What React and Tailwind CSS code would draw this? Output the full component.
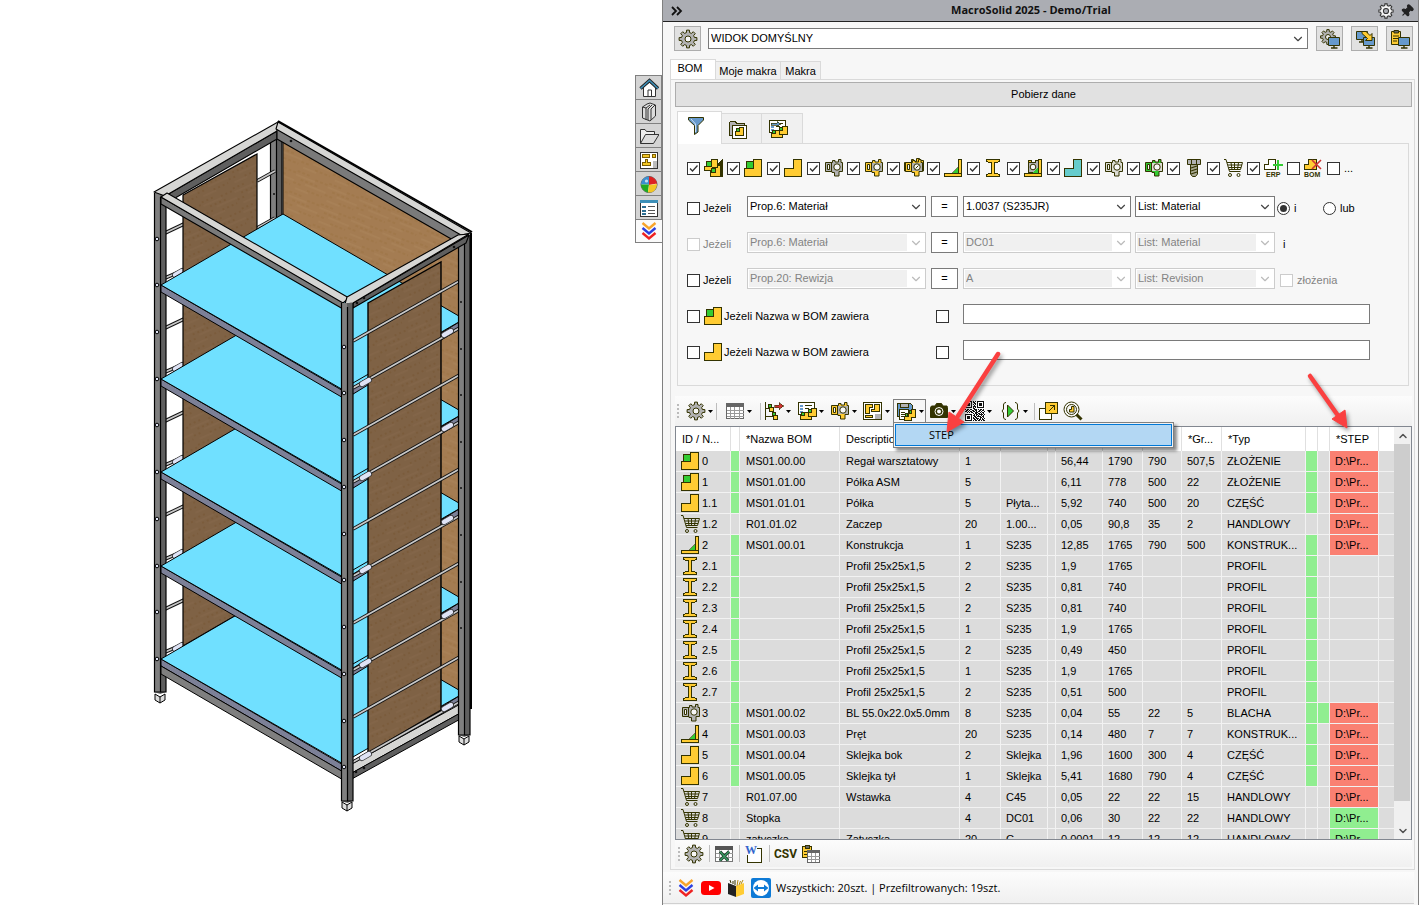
import React from 'react'
import clsx from 'clsx'
import { ChevronDown, ChevronUp, Pin } from 'lucide-react'

const INK = '#333300'
const YEL = '#ffcc33'
const GRN = '#33cc33'
const GRY = '#b2b2b2'
const BLU = '#6699cc'

const gearPath = (cx, cy, outer, inner, teeth) => {
  const points = []
  for (let i = 0; i < teeth; i++) {
    const step = (Math.PI * 2) / teeth
    const mid = i * step - Math.PI / 2
    const corners = [[-0.3, inner], [-0.2, outer], [0.2, outer], [0.3, inner]]
    corners.forEach(([k, r]) => {
      points.push(`${(cx + Math.cos(mid + k * step) * r).toFixed(2)} ${(cy + Math.sin(mid + k * step) * r).toFixed(2)}`)
    })
  }
  return `M${points.join('L')}Z`
}

const Icon = ({ children, crisp, className = 'w-5 h-5' }) => (
  <svg
    viewBox="0 0 20 20"
    className={clsx('shrink-0', className)}
    fill="none"
    stroke={INK}
    shapeRendering={crisp ? 'crispEdges' : 'auto'}
    aria-hidden="true"
  >
    {children}
  </svg>
)

const GearIcon = () => (
  <Icon>
    <path d={gearPath(10, 10, 9, 6.6, 8)} fill={GRY} />
    <circle cx="10" cy="10" r="3" fill="#f7f7f7" />
  </Icon>
)

const PartIcon = ({ fill = YEL }) => (
  <Icon crisp>
    <path d="M9.5 1.5H17.5V18.5H.5V10.5H9.5Z" fill={fill} />
  </Icon>
)

const AssemblyIcon = () => (
  <Icon crisp>
    <path d="M9.5 1.5H17.5V18.5H.5V10.5H9.5Z" fill={YEL} />
    <path d="M2.5 3.5H9.5V10.5H2.5Z" fill={GRN} />
  </Icon>
)

const MultiAssemblyIcon = () => (
  <Icon crisp>
    <path d="M7.5 1.5H13.5V6.5H17.5V18.5H6.5V12.5H.5V8.5H7.5Z" fill={YEL} />
    <path d="M8 9.5H13.5V7" />
    <path d="M2.5 3.5H7.5V8.5H2.5Z M7.5 10.5H11.5V14.5H7.5Z" fill={GRN} />
    <path d="M13.5 6.5L18.5 1.5V18.5H16.5V7.5H13.5Z" fill={INK} />
  </Icon>
)

const SheetIcon = ({ fill = GRY, body = fill, multi = false }) => (
  <Icon>
    {multi && <path d="M.5 4.5H7.5V1.5H9.5V3.5H12.5V.5H15.5V2.5H19.5V13H.5Z" fill={YEL} />}
    <path d="M1.5 4.5H8.5V2.5H11V4H14.5V1.5H17V4.5H18.5V13.5H15V18H10.5V14.5H8V13.5H1.5Z" fill={fill} />
    <path d="M8 5H18V13H8Z" fill={body} stroke="none" />
    <path d="M7.5 4.5V13.5" />
    <path d="M3.5 6.5H5.5V11.5H3.5Z" fill="#f7f7f7" />
    <circle cx="13" cy="9" r="3.2" fill="#f7f7f7" />
    {multi && <path d="M11.5 10.5L14.5 7.5" />}
  </Icon>
)

const FrameIcon = () => (
  <Icon crisp>
    <path d="M14.5 1.5H17.5V15.5H14.5Z M.5 15.5H17.5V18.5H.5Z" fill={YEL} />
    <path d="M8 15L14 9V15Z" fill={GRN} stroke={INK} strokeWidth="0.6" />
  </Icon>
)

const ProfileIcon = () => (
  <Icon crisp>
    <path d="M2.5 1.5H15.5V3.5L10.5 5V15L15.5 16.5V18.5H2.5V16.5L7.5 15V5L2.5 3.5Z" fill={YEL} />
  </Icon>
)

const WeldmentIcon = () => (
  <Icon crisp>
    <path d="M4.5 2.5H7.5V4.5H11.5V2.5H14.5V14.5H4.5Z" fill={GRY} />
    <path d="M14.5 1.5H17.5V15.5H14.5Z M.5 15.5H17.5V18.5H.5Z M4.5 2.5H7.5V4.5H4.5Z" fill={YEL} />
    <circle cx="9" cy="9" r="2.8" fill="#f7f7f7" shapeRendering="auto" />
    <path d="M8 15L14 9V15Z" fill={GRN} stroke="none" />
  </Icon>
)

const BoltIcon = () => (
  <Icon>
    <path d="M3.5 1.5H16.5V6.5H3.5Z" fill={GRY} />
    <path d="M7.5 1.5V6.5M12.5 1.5V6.5" />
    <path d="M6.5 6.5H13.5V16L11.5 18.5H8.5L6.5 16Z" fill="#a8a890" />
    <path d="M7 10L13 8M7 13L13 11M7 16L13 14" strokeWidth="1.2" />
  </Icon>
)

const CartIcon = () => (
  <Icon>
    <path d="M0 1.5H2L5.5 13.5H16.5M3 4.5H18.5L16.5 11.5H5M4 7H18M4.5 9.5H17M7 4.5L8 11.5M10.5 4.5V11.5M14.5 4.5L13.5 11.5" />
    <circle cx="6" cy="17" r="1.5" />
    <circle cx="14.5" cy="17" r="1.5" />
  </Icon>
)

const IconCaption = ({ x, children }) => (
  <text x={x} y="19" fontSize="7" fontWeight="700" fontFamily="Liberation Sans, sans-serif" fill={INK} stroke="none">
    {children}
  </text>
)

const ErpIcon = () => (
  <Icon className="w-5 h-5 overflow-visible">
    <path d="M4.5 1.5H11.5V11.5H.5V6.5H4.5Z" fill="#fff" shapeRendering="crispEdges" />
    <path d="M9 7H19M14 2V12" stroke={GRN} strokeWidth="2" />
    <IconCaption x="2">ERP</IconCaption>
  </Icon>
)

const BomIcon = () => (
  <Icon className="w-5 h-5 overflow-visible">
    <path d="M4.5 1.5H12.5V11.5H.5V6.5H4.5Z" fill={YEL} shapeRendering="crispEdges" />
    <path d="M8 2L17 11M17 2L8 11" stroke="#cc3333" strokeWidth="1.6" />
    <IconCaption x="0">BOM</IconCaption>
  </Icon>
)

const Monitor = ({ x, y }) => (
  <g transform={`translate(${x} ${y})`}>
    <path d="M.5 .5H11.5V8.5H.5Z" fill={BLU} />
    <path d="M6 8.5V11M3 11H9.5" strokeWidth="1.4" />
  </g>
)

const GearMonitorIcon = () => (
  <Icon>
    <path d={gearPath(8, 8, 7.5, 5.5, 8)} fill={GRY} />
    <circle cx="8" cy="8" r="2.5" fill="#eee" />
    <Monitor x="8" y="8" />
  </Icon>
)

const SwapMonitorIcon = () => (
  <Icon>
    <Monitor x="1" y="2" />
    <Monitor x="8" y="8" />
    <path d="M7 2.5H11L15 6.5L17 4.5V11.5H10.5L12.5 9.5L7 4.5Z" fill={YEL} />
  </Icon>
)

const ClipboardMonitorIcon = () => (
  <Icon>
    <path d="M1.5 2.5H10.5V15.5H1.5Z" fill={YEL} />
    <path d="M4 1.5H8.5V4H4Z" fill="#666" />
    <path d="M3 7H9M3 9.5H9M3 12H7" />
    <Monitor x="8" y="8" />
  </Icon>
)

const FunnelIcon = () => (
  <Icon>
    <path d="M2.5 1.5H17.5V4L12 9.5V16L8.5 18.5V9.5L2.5 4Z" fill={BLU} />
    <path d="M5 3L9.5 8V16" stroke="#cfe0f2" />
  </Icon>
)

const FolderPartIcon = () => (
  <Icon crisp>
    <path d="M1.5 16.5V3.5L2.5 2.5H7.5L8.5 4.5H16.5V16.5Z" fill={GRY} />
    <path d="M4.5 6.5H18.5V19H4.5Z" fill="#fff" />
    <path d="M11.5 8.5H15.5V16.5H7.5V12.5H11.5Z" fill={YEL} />
    <path d="M8.5 9.5H11.5V12.5H8.5Z" fill={GRN} />
  </Icon>
)

const ListPartIcon = ({ arrow }) => (
  <Icon crisp>
    <path d="M1.5 1.5H17.5V13.5H1.5Z" fill="#fff" />
    <path d="M3 4.5H6M3 7.5H6M3 10.5H6" stroke={BLU} strokeWidth="2" />
    <path d="M8 4.5H15M8 7.5H12" />
    {arrow && <path d="M3 4H9V2.5L13 5L9 7.5V6H3Z" fill={BLU} strokeWidth="0.7" />}
    <path d="M14.5 7.5H19V15.5H14.5V18.5H3.5V14.5H7.5V11.5H14.5Z" fill={YEL} />
    <path d="M11.5 11.5V15.5H14.5" />
    <path d="M11.5 8.5H14.5V11.5H11.5Z M4.5 11.5H7.5V14.5H4.5Z" fill={GRN} />
  </Icon>
)

const GridIcon = () => (
  <Icon crisp>
    <path d="M1.5 2.5H18.5V17.5H1.5Z" fill="#fff" stroke="#666" />
    <path d="M1 2H19V6H1Z" fill="#666" stroke="none" />
    <path d="M1.5 9.5H18.5M1.5 12.5H18.5M1.5 15.5H18.5M5.5 6V17.5M9.5 6V17.5M14.5 6V17.5" stroke="#999" />
  </Icon>
)

const TreeIcon = () => (
  <Icon crisp>
    <path d="M1.5 1V19" />
    <path d="M2 7.5H5M2 15.5H9" />
    <path d="M5.5 6.5H9.5V10.5H5.5Z M9.5 14.5H13.5V18.5H9.5Z" fill={YEL} />
    <path d="M4.5 3.5H7.5V6.5H4.5Z M8.5 11.5H11.5V14.5H8.5Z" fill={GRN} />
    <path d="M10.5 4H15V1.5L19.5 5L15 8.5V6.5H10.5Z" fill="#cc3333" strokeWidth="0.6" />
  </Icon>
)

const DrawingIcon = () => (
  <Icon crisp>
    <path d="M.5 1.5H18.5V18.5H.5Z" fill="#fff" />
    <path d="M2.5 3.5H9.5V6.5H6.5V12.5H2.5Z M11.5 3.5H16.5V10.5H8.5V8.5H11.5Z M2.5 14.5H9.5V16.5H2.5Z" fill={YEL} />
    <path d="M12 13H18V18H12Z" fill={GRY} stroke="none" />
  </Icon>
)

const SaveStepIcon = () => (
  <Icon crisp>
    <path d="M.5 1.5H13.5L15.5 3.5V14.5H.5Z" fill={BLU} />
    <path d="M3.5 1.5H11.5V5.5H3.5Z" fill={GRY} />
    <path d="M2.5 7.5H11.5V17.5H2.5Z" fill="#fff" />
    <path d="M4 10.5H8M4 12.5H8M4 14.5H7" />
    <path d="M14.5 7.5H18.5V15.5H14.5V18.5H7.5V14.5H11.5V11.5H14.5Z" fill={YEL} />
    <path d="M12.5 8.5H14.5V11.5H12.5Z M8.5 11.5H10.5V14.5H8.5Z" fill={GRN} />
  </Icon>
)

const CameraIcon = () => (
  <Icon>
    <path d="M1.5 6.5L2.5 5H6L7.5 2.5H12.5L14 5H18L18.5 6.5V16.5H1.5Z" fill={INK} />
    <circle cx="10" cy="10.5" r="4" stroke="#fff" />
    <circle cx="10" cy="10.5" r="2" fill="#fff" stroke="none" />
  </Icon>
)

const QR_ROWS = [
  '11111110101011111110', '10000010110010000010', '10111010011010111010', '10111010101010111010',
  '10111010010010111010', '10000010111010000010', '11111110101011111110', '00000000110000000000',
  '10110110011101011010', '01101001101100110110', '11010110110101101001', '00101011001110010110',
  '00000000101101101010', '11111110010110111101', '10000010110101001010', '10111010011011110110',
  '10111010101100011010', '10111010110111010101', '10000010011010110110', '11111110101101101011'
]

const QrIcon = () => (
  <svg viewBox="0 0 20 20" className="w-5 h-5 shrink-0" shapeRendering="crispEdges" aria-hidden="true">
    <path d="M0 0H20V20H0Z" fill="#fff" />
    {QR_ROWS.map((row, y) =>
      row.split('').map((bit, x) => bit === '1' && <rect key={`${x}-${y}`} x={x} y={y} width="1" height="1" fill="#111" />)
    )}
  </svg>
)

const RunIcon = () => (
  <Icon>
    <path d="M5 1.5C3.5 1.5 2.5 2.5 2.5 4V8L1 10L2.5 12V16C2.5 17.5 3.5 18.5 5 18.5M14 1.5C15.5 1.5 16.5 2.5 16.5 4V8L18 10L16.5 12V16C16.5 17.5 15.5 18.5 14 18.5" />
    <path d="M6.5 4L12.5 10L6.5 16Z" fill={GRN} />
  </Icon>
)

const ExportIcon = () => (
  <Icon crisp>
    <path d="M.5 7.5H12.5V18.5H.5Z" fill="#fff" />
    <path d="M6.5 1.5H18.5V12.5H6.5Z" fill={YEL} />
    <path d="M10 10L15 5M11 4.5H15.5V9" strokeWidth="1.4" />
  </Icon>
)

const SearchPartIcon = () => (
  <Icon>
    <circle cx="8.5" cy="8.5" r="7.5" />
    <circle cx="8.5" cy="8.5" r="5" />
    <path d="M8.5 5.5H11V11H6.5V8.5H8.5Z" fill={YEL} />
    <path d="M13.5 13.5L18.5 18.5" strokeWidth="3" />
  </Icon>
)

const ExcelIcon = () => (
  <Icon crisp>
    <path d="M1.5 2.5H18.5V17.5H1.5Z" fill="#fff" stroke="#777" />
    <path d="M1 2H19V6H1Z" fill="#555" stroke="none" />
    <path d="M1.5 9.5H18.5M1.5 13.5H18.5M5.5 6V17M14.5 6V17" stroke="#999" />
    <path d="M6 7.5L14 16.5M15 7.5L6 16.5" stroke="#1d3c2a" strokeWidth="3" shapeRendering="auto" />
    <path d="M6 7.5L14 16.5M15 7.5L6 16.5" stroke="#3a9a62" strokeWidth="1.4" shapeRendering="auto" />
  </Icon>
)

const WordIcon = () => (
  <Icon>
    <path d="M13 4.5H17.5V18.5H3.5V11" fill="#fff" shapeRendering="crispEdges" />
    <text x="1" y="10" fontSize="12" fontWeight="700" fontFamily="Liberation Serif, serif" fill="#3366cc" stroke="none">W</text>
  </Icon>
)

const PasteGridIcon = () => (
  <Icon crisp>
    <path d="M1.5 2.5H10.5V13.5H1.5Z" fill={YEL} />
    <path d="M4 1.5H8.5V4H4Z" fill="#666" />
    <path d="M3 7.5H6M3 10.5H6" />
    <path d="M6.5 6.5H18.5V18.5H6.5Z" fill="#fff" stroke="#666" />
    <path d="M6 6H19V9H6Z" fill="#666" stroke="none" />
    <path d="M6.5 12.5H18.5M6.5 15.5H18.5M10.5 9V18M14.5 9V18" stroke="#999" />
  </Icon>
)

const ChevronsIcon = ({ colors = ['#f7a42b', '#2b3fe0', '#ee2222'] }) => (
  <Icon>
    {colors.map((color, i) => (
      <path key={color} d={`M3.5 ${2 + i * 5}L10 ${7.5 + i * 5}L16.5 ${2 + i * 5}`} stroke={color} strokeWidth="2.4" />
    ))}
  </Icon>
)

const HomeIcon = () => (
  <Icon>
    <path d="M4.5 9V18.5H16.5V9L10.5 4Z" fill="#fff" stroke="#333" />
    <path d="M9 18V12H12.5V18" stroke="#333" />
    <path d="M1.5 10.5L10.5 2.5L19 10.5" stroke="#222" strokeWidth="3.4" />
    <path d="M1.5 10.5L10.5 2.5L19 10.5" stroke="#3c8fb8" strokeWidth="1.6" />
  </Icon>
)

const BooksIcon = () => (
  <Icon>
    <path d="M3.5 5L8 2L11 1L16.5 3V14L11 19L3.5 16Z" fill="#ddd" stroke="#333" />
    <path d="M3.5 5L7 6V18M7 6L11 3M9 7V18M9 7L13 3M12 7V18M12 7L16 3" stroke="#333" />
  </Icon>
)

const OpenFolderIcon = () => (
  <Icon>
    <path d="M1.5 17.5V3.5H6L7.5 5.5H15.5V8" fill="#eee" stroke="#333" />
    <path d="M1.5 17.5L6.5 8.5H20L14.5 17.5Z" fill="#ddd" stroke="#333" />
  </Icon>
)

const PaletteIcon = () => (
  <Icon crisp>
    <path d="M1.5 2.5H18.5V18.5H1.5Z" fill="#fff" stroke="#333" />
    <path d="M3.5 4.5H10.5V7.5H3.5Z M13.5 4.5H16.5V7.5H13.5Z M6.5 9.5H8.5V12.5H11.5V15.5H3.5V12.5H6.5Z" fill="#f3c623" stroke="#7a5c00" />
    <path d="M14 11H18V18H14Z" fill="#bbb" stroke="none" />
  </Icon>
)

const AppearanceIcon = () => (
  <Icon>
    <circle cx="10" cy="10.5" r="8" fill="#fff" stroke="#555" />
    <path d="M10 2.5A8 8 0 0 0 2 10.5L10 10.5Z" fill="#3c8fd0" stroke="none" />
    <path d="M10 2.5A8 8 0 0 1 18 9.5L10 11Z" fill="#dd2222" stroke="none" />
    <path d="M2 10.5A8 8 0 0 0 9 18.5L10 10.5Z" fill="#22aa22" stroke="none" />
    <path d="M18 10A8 8 0 0 1 9 18.5L10 11Z" fill="#f3c623" stroke="none" />
    <circle cx="7.5" cy="7" r="1.6" fill="#fff" opacity="0.7" stroke="none" />
  </Icon>
)

const PropertiesIcon = () => (
  <Icon crisp>
    <path d="M1.5 2.5H18.5V18.5H1.5Z" fill="#fff" stroke="#333" />
    <path d="M1 2H19V5H1Z" fill="#3c8fb8" stroke="none" />
    <path d="M3 8.5H7M3 12.5H7M3 16H7" stroke="#2d6f94" strokeWidth="2" />
    <path d="M9 8.5H16M9 12.5H16M9 15.5H16" stroke="#555" />
  </Icon>
)

const YoutubeIcon = () => (
  <Icon>
    <rect x="0" y="3" width="20" height="14" rx="3.5" fill="#ff0000" stroke="none" />
    <path d="M8 7L13.5 10L8 13Z" fill="#fff" stroke="none" />
  </Icon>
)

const BookIcon = () => (
  <Icon>
    <path d="M2 5L10 8V19L2 16Z" fill="#222" stroke="none" />
    <path d="M18 5L10 8V19L18 16Z" fill={YEL} stroke="none" />
    <path d="M11 8L12 2M13 7L14.5 3M15 6L17 2" stroke="#b28a10" />
    <path d="M5 5L4 2M7 6V3M9 7V2" />
  </Icon>
)

const RemoteIcon = () => (
  <Icon>
    <rect x="0" y="0" width="20" height="20" rx="2" fill="#0d7ad6" stroke="none" />
    <circle cx="10" cy="10" r="8" fill="#fff" stroke="none" />
    <path d="M2.5 10L7 6.5V9H13V6.5L17.5 10L13 13.5V11H7V13.5Z" fill="#0d7ad6" stroke="none" />
  </Icon>
)

const ROW_ICONS = {
  asm: <AssemblyIcon />,
  part: <PartIcon />,
  cart: <CartIcon />,
  frame: <FrameIcon />,
  profile: <ProfileIcon />,
  sheet: <SheetIcon />
}

const typeFilters = [
  { name: 'Wszystkie', icon: <MultiAssemblyIcon />, checked: true },
  { name: 'Złożenie', icon: <AssemblyIcon />, checked: true },
  { name: 'Część', icon: <PartIcon />, checked: true },
  { name: 'Blacha', icon: <SheetIcon />, checked: true },
  { name: 'Blacha złożenie', icon: <SheetIcon fill={YEL} body={GRY} />, checked: true },
  { name: 'Blachy', icon: <SheetIcon fill={YEL} body={GRY} multi />, checked: true },
  { name: 'Konstrukcja', icon: <FrameIcon />, checked: true },
  { name: 'Profil', icon: <ProfileIcon />, checked: true },
  { name: 'Konstrukcja blacha', icon: <WeldmentIcon />, checked: true },
  { name: 'Część inna', icon: <PartIcon fill="#66cccc" />, checked: true },
  { name: 'Blacha inna', icon: <SheetIcon fill="#dcdcd4" />, checked: true },
  { name: 'Blacha zielona', icon: <SheetIcon fill={GRN} body="#dcdcd4" />, checked: true },
  { name: 'Normalia', icon: <BoltIcon />, checked: true },
  { name: 'Handlowy', icon: <CartIcon />, checked: true },
  { name: 'ERP', icon: <ErpIcon />, checked: true },
  { name: 'BOM', icon: <BomIcon />, checked: false }
]

const conditions = [
  { prop: 'Prop.6: Materiał', value: '1.0037 (S235JR)', list: 'List: Material', disabled: false, off: false },
  { prop: 'Prop.6: Materiał', value: 'DC01', list: 'List: Material', disabled: true, off: true },
  { prop: 'Prop.20: Rewizja', value: 'A', list: 'List: Revision', disabled: true, off: false }
]

const columns = [
  { label: 'ID / N...', width: 55 },
  { label: '', width: 9 },
  { label: '*Nazwa BOM', width: 100 },
  { label: 'Description', width: 120 },
  { label: '', width: 41 },
  { label: '', width: 47 },
  { label: '', width: 8 },
  { label: '', width: 47 },
  { label: '', width: 40 },
  { label: '', width: 39 },
  { label: '*Gr...', width: 40 },
  { label: '*Typ', width: 84 },
  { label: '', width: 12 },
  { label: '', width: 12 },
  { label: '*STEP', width: 49 },
  { label: '', width: 16 }
]

// icon, id, name, description, qty, material, mass, length, width, thickness, type, flags, step
const rows = [
  ['asm', '0', 'MS01.00.00', 'Regał warsztatowy', '1', '', '56,44', '1790', '790', '507,5', 'ZŁOŻENIE', 'g', 'red'],
  ['asm', '1', 'MS01.01.00', 'Półka ASM', '5', '', '6,11', '778', '500', '22', 'ZŁOŻENIE', 'g', 'red'],
  ['part', '1.1', 'MS01.01.01', 'Półka', '5', 'Płyta...', '5,92', '740', '500', '20', 'CZĘŚĆ', 'g', 'red'],
  ['cart', '1.2', 'R01.01.02', 'Zaczep', '20', '1.00...', '0,05', '90,8', '35', '2', 'HANDLOWY', '', 'red'],
  ['frame', '2', 'MS01.00.01', 'Konstrukcja', '1', 'S235', '12,85', '1765', '790', '500', 'KONSTRUK...', 'g', 'red'],
  ['profile', '2.1', '', 'Profil 25x25x1,5', '2', 'S235', '1,9', '1765', '', '', 'PROFIL', 'g', ''],
  ['profile', '2.2', '', 'Profil 25x25x1,5', '2', 'S235', '0,81', '740', '', '', 'PROFIL', 'g', ''],
  ['profile', '2.3', '', 'Profil 25x25x1,5', '2', 'S235', '0,81', '740', '', '', 'PROFIL', 'g', ''],
  ['profile', '2.4', '', 'Profil 25x25x1,5', '1', 'S235', '1,9', '1765', '', '', 'PROFIL', 'g', ''],
  ['profile', '2.5', '', 'Profil 25x25x1,5', '2', 'S235', '0,49', '450', '', '', 'PROFIL', 'g', ''],
  ['profile', '2.6', '', 'Profil 25x25x1,5', '1', 'S235', '1,9', '1765', '', '', 'PROFIL', 'g', ''],
  ['profile', '2.7', '', 'Profil 25x25x1,5', '2', 'S235', '0,51', '500', '', '', 'PROFIL', 'g', ''],
  ['sheet', '3', 'MS01.00.02', 'BL 55.0x22.0x5.0mm', '8', 'S235', '0,04', '55', '22', '5', 'BLACHA', 'gg', 'red'],
  ['frame', '4', 'MS01.00.03', 'Pręt', '20', 'S235', '0,14', '480', '7', '7', 'KONSTRUK...', 'g', 'red'],
  ['part', '5', 'MS01.00.04', 'Sklejka bok', '2', 'Sklejka', '1,96', '1600', '300', '4', 'CZĘŚĆ', 'g', 'red'],
  ['part', '6', 'MS01.00.05', 'Sklejka tył', '1', 'Sklejka', '5,41', '1680', '790', '4', 'CZĘŚĆ', 'g', 'red'],
  ['cart', '7', 'R01.07.00', 'Wstawka', '4', 'C45', '0,05', '22', '22', '15', 'HANDLOWY', '', 'red'],
  ['cart', '8', 'Stopka', '', '4', 'DC01', '0,06', '30', '22', '22', 'HANDLOWY', '', 'green'],
  ['cart', '9', 'zatyczka', 'Zatyczka', '20', 'G...', '0,0001', '12', '12', '12', 'HANDLOWY', '', 'green']
]

const sideTabs = [
  { name: 'Zasoby', icon: <HomeIcon /> },
  { name: 'Biblioteka projektu', icon: <BooksIcon /> },
  { name: 'Eksplorator plików', icon: <OpenFolderIcon /> },
  { name: 'Paleta widoków', icon: <PaletteIcon /> },
  { name: 'Wygląd', icon: <AppearanceIcon /> },
  { name: 'Właściwości', icon: <PropertiesIcon /> }
]

const SHELVES = [659, 566, 472, 379, 285]
const RODS = [0, 1, 2, 3, 4, 5, 6, 7, 8]

const Foot = ({ x, y }) => (
  <g>
    <path d={`M${x - 5} ${y}L${x} ${y + 3}L${x + 5} ${y}V${y + 6}L${x} ${y + 9}L${x - 5} ${y + 6}Z`} fill="#ddd" stroke="#000" />
    <path d={`M${x} ${y + 3}V${y + 9}`} stroke="#000" />
  </g>
)

const Post = ({ x, top, bottom }) => (
  <g>
    <path d={`M${x} ${top}H${x + 6}V${bottom + 2}L${x} ${bottom}Z`} fill="#7f7f7f" />
    <path d={`M${x + 6} ${top}H${x + 12}V${bottom}L${x + 6} ${bottom + 2}Z`} fill="#5f5f5f" />
    <path d={`M${x}.5 ${top}V${bottom}H${x + 12}V${top}M${x + 6}.5 ${top + 4}V${bottom}`} stroke="#000" fill="none" strokeWidth="1.2" />
  </g>
)

const Rod = ({ x1, y1, x2, y2 }) => (
  <g>
    <path d={`M${x1} ${y1}L${x2} ${y2}`} stroke="#111" strokeWidth="3.6" />
    <path d={`M${x1} ${y1}L${x2} ${y2}`} stroke="#c9c9c9" strokeWidth="1.8" />
  </g>
)

const Clip = ({ x, y }) => (
  <g strokeLinecap="round">
    <path d={`M${x - 3} ${y + 2}L${x + 4} ${y - 2}`} stroke="#333" strokeWidth="6" />
    <path d={`M${x - 3} ${y + 2}L${x + 4} ${y - 2}`} stroke="#dfe3f5" strokeWidth="4.4" />
  </g>
)

const ShelfModel = () => (
  <svg viewBox="0 0 635 905" className="w-full" role="img" aria-label="Regał warsztatowy">
    <defs>
      <pattern id="grain-light" width="34" height="22" patternUnits="userSpaceOnUse" patternTransform="rotate(22)">
        <rect width="34" height="22" fill="#a47c52" />
        <path d="M0 3H14M20 5H34M6 10H26M0 15H9M16 18H32" stroke="#96703f" strokeWidth="0.7" strokeDasharray="3 2" />
        <path d="M0 7H20M12 13H34M4 20H18" stroke="#ad875d" strokeWidth="0.8" />
      </pattern>
      <pattern id="grain-dark" width="34" height="22" patternUnits="userSpaceOnUse" patternTransform="rotate(-24)">
        <rect width="34" height="22" fill="#7f6245" />
        <path d="M0 3H14M20 5H34M6 10H26M0 15H9M16 18H32" stroke="#73502a" strokeWidth="0.7" strokeDasharray="2 3" />
        <path d="M0 7H20M12 13H34M4 20H18" stroke="#866a4d" strokeWidth="0.8" />
      </pattern>
    </defs>

    {/* back posts and panels */}
    <Post x={270} top={132} bottom={230} />
    <path d="M283 138L459 240V700L283 600Z" fill="url(#grain-light)" stroke="#000" />
    {[233, 328, 421, 515, 609].map((y) => (
      <Rod key={y} x1={165} y1={y} x2={184} y2={y - 9} />
    ))}
    {SHELVES.map((y) => (
      <g key={y}>
        <Rod x1={165} y1={y - 7} x2={184} y2={y - 15} />
        <Clip x={178} y={y - 12} />
      </g>
    ))}
    <Rod x1={257} y1={181} x2={275} y2={171} />
    <Rod x1={257} y1={228} x2={275} y2={218} />
    <path d="M183 195L257 154V603L183 646Z" fill="url(#grain-dark)" stroke="#000" strokeWidth="1.2" />
    <Post x={154} top={193} bottom={692} />

    {/* shelves, bottom one first */}
    {SHELVES.map((y) => (
      <g key={y} stroke="#000" strokeWidth="1">
        <path d={`M161 ${y}L345 ${y + 107}L464 ${y + 34}V${y + 41}L345 ${y + 114}L161 ${y + 7}Z`} fill="#7c8097" />
        <path d={`M161 ${y}L283 ${y - 71}L464 ${y + 34}L346 ${y + 102}L345 ${y + 106}Z`} fill="#70e0ff" />
      </g>
    ))}

    {/* lower rails */}
    <path d="M161 666L345 773V781L161 674Z" fill="#7f7f7f" stroke="#000" />
    <path d="M350 765L464 702V711L350 774Z" fill="#d6d6d4" stroke="#000" />
    <path d="M350 774L464 711V717L350 780Z" fill="#5f5f5f" stroke="#000" />

    {/* side panel */}
    <path d="M368 303L441 262V710L368 753Z" fill="url(#grain-dark)" stroke="#000" strokeWidth="1.4" />
    {RODS.map((i) => (
      <Rod key={i} x1={353} y1={341 + i * 47} x2={463} y2={279 + i * 47} />
    ))}
    <Rod x1={353} y1={762} x2={463} y2={700} />
    {SHELVES.map((y) => (
      <g key={y}>
        <Clip x={365} y={y + 97} />
        <Clip x={447} y={y + 48} />
      </g>
    ))}

    {/* posts */}
    <Post x={458} top={235} bottom={735} />
    <path d="M471 233V709" stroke="#000" strokeWidth="2" />

    {/* upper frame */}
    <g stroke="#000" strokeWidth="1.1" strokeLinejoin="round">
      <path d="M165 196L277 131V139L170 201Z" fill="#5f5f5f" />
      <path d="M154 192L278 122L283 126L277 131L165 196Z" fill="#d6d6d4" />
      <path d="M277 129L461 234L453 240L277 139Z" fill="#7a7a7a" />
      <path d="M278 122L471 233L461 235L276 129Z" fill="#d6d6d4" />
      <path d="M161 197L343 302V309L161 204Z" fill="#7a7a7a" />
      <path d="M167 193L349 298L343 303L161 197Z" fill="#d6d6d4" />
      <path d="M353 303L469 235L466 243L353 308Z" fill="#5f5f5f" />
      <path d="M347 297L458 235L469 234L353 303L345 304Z" fill="#d6d6d4" />
    </g>
    <path d="M278 121L472 232" stroke="#000" strokeWidth="2" />
    <Post x={341} top={303} bottom={801} />
    <g fill="#e0e4f5" stroke="#000">
      {[347, 393, 440, 487, 534, 580, 627, 674, 721, 767].map((y) => (
        <circle key={y} cx="344" cy={y} r="1.8" />
      ))}
      {[239, 285, 332, 379, 425, 472, 519, 566, 612, 659].map((y) => (
        <circle key={y} cx="157" cy={y} r="1.8" />
      ))}
    </g>
    <g fill="#111">
      {[302, 349, 395, 442, 488, 535, 582, 628].map((y) => (
        <circle key={y} cx="461" cy={y} r="1" />
      ))}
      <circle cx="274" cy="194" r="1" />
      <circle cx="357" cy="303" r="1.3" />
      <circle cx="364" cy="298" r="1.3" />
      <circle cx="291" cy="141" r="1.3" />
      <circle cx="356" cy="772" r="1.3" />
      <circle cx="364" cy="768" r="1.3" />
      <circle cx="454" cy="247" r="1.3" />
    </g>
    <Foot x={160} y={694} />
    <Foot x={347} y={802} />
    <Foot x={464} y={736} />
  </svg>
)

const Checkbox = ({ label, ...props }) => (
  <span className="relative inline-flex w-[13px] h-[13px] shrink-0">
    <input
      type="checkbox"
      aria-label={label}
      className="peer appearance-none w-[13px] h-[13px] bg-white border border-[#333] disabled:border-[#ccc]"
      {...props}
    />
    <svg viewBox="0 0 13 13" className="absolute inset-0 hidden peer-checked:block pointer-events-none" fill="none" stroke="#333" strokeWidth="1.3">
      <path d="M3 6.5L5.5 9L10.5 3.5" />
    </svg>
  </span>
)

const Radio = (props) => (
  <span className="relative inline-flex w-[13px] h-[13px] shrink-0">
    <input type="radio" className="peer appearance-none w-[13px] h-[13px] rounded-full bg-white border border-[#333]" {...props} />
    <span className="absolute inset-[3px] rounded-full bg-[#333] hidden peer-checked:block pointer-events-none" />
  </span>
)

const Select = ({ value, label, disabled, className }) => (
  <span className={clsx('relative block h-[21px]', className)}>
    <select
      aria-label={label}
      disabled={disabled}
      className="appearance-none block w-full h-full pl-[2px] pr-5 pb-[2px] bg-white text-black border border-[#7a7a7a] disabled:border-[#ccc] disabled:text-[#838383] disabled:opacity-100 disabled:bg-[#f0f0f0] disabled:shadow-[inset_0_0_0_1px_white]"
    >
      <option>{value}</option>
    </select>
    <span className={clsx('absolute right-px top-px bottom-px w-[18px] flex items-center justify-center bg-white pointer-events-none', disabled ? 'text-[#bbb]' : 'text-[#444]')}>
      <ChevronDown className="w-[14px] h-[14px]" strokeWidth={2} />
    </span>
  </span>
)

const SquareButton = ({ label, children, className }) => (
  <button type="button" aria-label={label} className={clsx('w-[27px] h-[25px] shrink-0 flex items-center justify-center border border-[#adadad] bg-[#e1e1e1]', className)}>
    {children}
  </button>
)

const Grip = () => (
  <span className="flex flex-col gap-[2px] w-[2px] shrink-0">
    {[0, 1, 2, 3].map((i) => (
      <span key={i} className="w-[2px] h-[2px] bg-[#bbb]" />
    ))}
  </span>
)

const Separator = ({ className }) => <span className={clsx('w-px h-[17px] bg-[#bdbdbd] shrink-0', className)} />

const Caret = () => (
  <svg viewBox="0 0 5 3" className="w-[5px] h-[3px] shrink-0" aria-hidden="true">
    <path d="M0 0H5L2.5 3Z" fill="#000" />
  </svg>
)

const ToolButton = ({ label, children, active }) => (
  <button
    type="button"
    aria-label={label}
    className={clsx('h-6 w-[33px] shrink-0 flex items-center gap-[2px] pl-[3px]', active && 'border border-b-0 border-[#808080] bg-[#f6f6f6]')}
  >
    {children}
    <Caret />
  </button>
)

const TitleBar = () => (
  <header className="h-[22px] shrink-0 flex items-center bg-[#abadb3] border-b border-[#222] text-[#111]">
    <button type="button" aria-label="Zwiń" className="w-[27px] h-full flex items-center justify-center">
      <svg viewBox="0 0 12 10" className="w-3 h-[10px]" fill="none" stroke="#111" strokeWidth="1.8">
        <path d="M1 1L5 5L1 9M6 1L10 5L6 9" />
      </svg>
    </button>
    <h1 className="flex-1 pr-1 pb-[2px] text-center text-[11px] leading-4 font-bold font-['Open_Sans',sans-serif]">MacroSolid 2025 - Demo/Trial</h1>
    <button type="button" aria-label="Ustawienia" className="w-5 h-full flex items-center justify-center">
      <svg viewBox="0 0 20 20" className="w-4 h-4" stroke="#333" strokeWidth="1.3">
        <path d={gearPath(10, 10, 9, 7, 8)} fill="#f4f4f4" />
        <circle cx="10" cy="10" r="3.2" fill="#abadb3" />
      </svg>
    </button>
    <button type="button" aria-label="Przypnij" className="w-[22px] h-full flex items-center justify-center">
      <Pin className="w-[14px] h-[14px] rotate-45" fill="#222" stroke="#222" />
    </button>
  </header>
)

const FilterPanel = () => (
  <section>
    <div className="flex items-end pl-[2px]" role="tablist">
      <button type="button" role="tab" aria-label="Filtr" aria-selected="true" className="w-[45px] h-[33px] -mb-px pb-1 pr-2 flex items-center justify-center bg-white border border-b-0 border-[#dadada]">
        <FunnelIcon />
      </button>
      <button type="button" role="tab" aria-label="Folder" aria-selected="false" className="w-10 h-[30px] pr-2 flex items-center justify-center bg-[#f0f0f0] border border-l-0 border-b-0 border-[#dadada]">
        <FolderPartIcon />
      </button>
      <button type="button" role="tab" aria-label="Lista" aria-selected="false" className="w-[41px] h-[30px] pr-2 flex items-center justify-center bg-[#f0f0f0] border border-l-0 border-b-0 border-[#dadada]">
        <ListPartIcon arrow />
      </button>
    </div>

    <div className="ml-[2px] mr-[3px] border border-[#dadada] bg-[#f7f7f7] pl-[9px] pr-[38px] pb-[9px]">
      <div className="flex items-center h-[52px] pb-1">
        {typeFilters.map((filter) => (
          <label key={filter.name} className="w-10 shrink-0 flex items-center gap-1">
            <Checkbox label={filter.name} defaultChecked={filter.checked} />
            {filter.icon}
          </label>
        ))}
        <label className="flex items-center gap-1">
          <Checkbox />
          ...
        </label>
      </div>

      {conditions.map((item, index) => (
        <div key={index} className="flex items-start h-9">
          <label className={clsx('w-[60px] shrink-0 pt-1.5 flex items-center gap-[3px] leading-[13px]', item.off && 'text-[#838383]')}>
            <Checkbox disabled={item.off} />
            Jeżeli
          </label>
          <Select value={item.prop} label="Właściwość" disabled={item.disabled} className="w-[179px]" />
          <button type="button" className="w-[27px] h-[21px] mx-[5px] border border-[#7a7a7a] bg-white leading-[13px]">=</button>
          <Select value={item.value} label="Wartość" disabled={item.disabled} className="w-[168px]" />
          <Select value={item.list} label="Lista" disabled={item.disabled} className="w-[140px] ml-1" />
          <div className="pt-1.5 pl-[2px] flex leading-[13px]">
            {index === 0 && (
              <>
                <label className="w-[46px] flex items-center gap-1">
                  <Radio name="operator" defaultChecked />
                  i
                </label>
                <label className="flex items-center gap-1">
                  <Radio name="operator" />
                  lub
                </label>
              </>
            )}
            {index === 1 && <span className="pl-[6px]">i</span>}
            {index === 2 && (
              <label className="pl-[3px] flex items-center gap-1 text-[#838383]">
                <Checkbox disabled />
                złożenia
              </label>
            )}
          </div>
        </div>
      ))}

      {[<AssemblyIcon key="a" />, <PartIcon key="p" />].map((icon, index) => (
        <div key={index} className="flex items-start h-9">
          <label className="w-[249px] shrink-0 pt-[2px] flex items-center gap-1">
            <Checkbox />
            <span className="flex items-center whitespace-nowrap">
              {icon}
              Jeżeli Nazwa w BOM zawiera
            </span>
          </label>
          <span className="w-[27px] shrink-0 pt-1.5 flex">
            <Checkbox label="Dokładnie" />
          </span>
          <input type="text" aria-label="Nazwa w BOM" className="flex-1 min-w-0 h-5 px-1 bg-white border border-[#7a7a7a]" />
        </div>
      ))}
    </div>
  </section>
)

const Toolbar = () => (
  <div className="relative z-10 h-[30px] shrink-0 flex items-center pl-[2px] bg-gradient-to-b from-[#fcfcfc] to-[#f0f0f0]">
    <Grip />
    <span className="w-1 shrink-0" />
    <ToolButton label="Ustawienia"><GearIcon /></ToolButton>
    <span className="w-1.5 shrink-0 flex"><Separator /></span>
    <ToolButton label="Tabela"><GridIcon /></ToolButton>
    <span className="w-1.5 shrink-0 flex justify-end"><Separator /></span>
    <ToolButton label="Struktura"><TreeIcon /></ToolButton>
    <ToolButton label="Lista części"><ListPartIcon /></ToolButton>
    <ToolButton label="Blachy"><SheetIcon fill={YEL} body={GRY} /></ToolButton>
    <ToolButton label="Rysunki"><DrawingIcon /></ToolButton>
    <div className="relative shrink-0">
      <ToolButton label="Zapis" active><SaveStepIcon /></ToolButton>
      <div role="menu" className="absolute left-0 top-[23px] w-[281px] p-px bg-[#f2f2f2] border border-[#808080] shadow-[3px_3px_3px_rgba(0,0,0,0.45)]">
        <button type="button" role="menuitem" className="block w-full h-[22px] pl-[33px] text-left bg-[#b3d7f3] border border-[#0078d7] text-[11px] leading-4 font-['Open_Sans',sans-serif]">
          STEP
        </button>
      </div>
    </div>
    <ToolButton label="Zrzut"><CameraIcon /></ToolButton>
    <span className="w-[3px] shrink-0" />
    <ToolButton label="Kod QR"><QrIcon /></ToolButton>
    <span className="w-[3px] shrink-0" />
    <ToolButton label="Makro"><RunIcon /></ToolButton>
    <Separator className="ml-[3px] mr-1" />
    <button type="button" aria-label="Eksport"><ExportIcon /></button>
    <button type="button" aria-label="Szukaj" className="ml-1"><SearchPartIcon /></button>
  </div>
)

const cellLine = 'border-r border-b border-[#f2f2f2]'

const BomTable = () => (
  <div className="flex-1 min-h-0 flex border border-[#828790] bg-[#f0f0f0]">
    <div className="flex-1 min-w-0 overflow-hidden">
      <table className="w-full table-fixed border-separate border-spacing-0">
        <colgroup>
          {columns.map((column, i) => (
            <col key={i} style={{ width: column.width }} />
          ))}
        </colgroup>
        <thead>
          <tr className="h-6 bg-white">
            {columns.map((column, i) => (
              <th key={i} scope="col" className={clsx('p-0 text-left font-normal whitespace-nowrap overflow-hidden border-r border-[#e0e0e0]', column.label && 'pl-[6px]')}>
                {column.label}
              </th>
            ))}
          </tr>
        </thead>
        <tbody>
          {rows.map(([icon, id, name, desc, qty, material, mass, length, width, thick, type, flags, step]) => (
            <tr key={id} className="h-[21px] bg-[#dcdcdc] whitespace-nowrap">
              <td className={clsx('p-0', cellLine)}>
                <span className="flex items-center gap-[1px] h-5 pl-[5px]">
                  {ROW_ICONS[icon]}
                  {id}
                </span>
              </td>
              <td className={clsx('p-0', cellLine, flags && 'bg-[#90ee90]')} />
              <td className={clsx('p-0 pl-[6px]', cellLine)}>{name}</td>
              <td className={clsx('p-0 pl-[6px]', cellLine)}>{desc}</td>
              <td className={clsx('p-0 pl-[5px]', cellLine)}>{qty}</td>
              <td className={clsx('p-0 pl-[5px]', cellLine)}>{material}</td>
              <td className={clsx('p-0', cellLine)} />
              <td className={clsx('p-0 pl-[5px]', cellLine)}>{mass}</td>
              <td className={clsx('p-0 pl-[5px]', cellLine)}>{length}</td>
              <td className={clsx('p-0 pl-[5px]', cellLine)}>{width}</td>
              <td className={clsx('p-0 pl-[5px]', cellLine)}>{thick}</td>
              <td className={clsx('p-0 pl-[5px]', cellLine)}>{type}</td>
              <td className={clsx('p-0', cellLine, flags && 'bg-[#90ee90]')} />
              <td className={clsx('p-0', cellLine, flags === 'gg' && 'bg-[#90ee90]')} />
              <td className={clsx('p-0 pl-[5px]', cellLine, step === 'red' && 'bg-[#fa8072]', step === 'green' && 'bg-[#90ee90]')}>
                {step && 'D:\\Pr...'}
              </td>
              <td className={clsx('p-0', cellLine)} />
            </tr>
          ))}
        </tbody>
      </table>
    </div>
    <div className="w-[17px] shrink-0 flex flex-col bg-[#f0f0f0] text-[#505050]">
      <span className="h-[17px] flex items-center justify-center"><ChevronUp className="w-3 h-3" strokeWidth={3} /></span>
      <span className="flex-[357_1_0%] bg-[#cdcdcd] mr-px" />
      <span className="flex-[21_1_0%]" />
      <span className="h-[17px] flex items-center justify-center"><ChevronDown className="w-3 h-3" strokeWidth={3} /></span>
    </div>
  </div>
)

const ExportBar = () => (
  <div className="h-[27px] shrink-0 flex items-center gap-1 pl-[3px] bg-gradient-to-b from-[#fcfcfc] to-[#f0f0f0]">
    <Grip />
    <button type="button" aria-label="Ustawienia eksportu"><GearIcon /></button>
    <Separator className="ml-px" />
    <button type="button" aria-label="Excel"><ExcelIcon /></button>
    <Separator className="ml-px" />
    <button type="button" aria-label="Word"><WordIcon /></button>
    <Separator className="ml-px" />
    <button type="button" className="text-[12px] leading-4 font-bold text-[#333300] font-['Roboto',sans-serif]">CSV</button>
    <button type="button" aria-label="Wklej"><PasteGridIcon /></button>
  </div>
)

const StatusBar = () => (
  <footer className="h-8 mt-[2px] mb-px shrink-0 flex items-center gap-[5px] pl-[6px] bg-gradient-to-b from-[#fcfcfc] to-[#f0f0f0] border-b border-[#d0d0d0] mr-1">
    <Grip />
    <button type="button" aria-label="MacroSolid"><ChevronsIcon /></button>
    <a href="#youtube" aria-label="YouTube"><YoutubeIcon /></a>
    <a href="#pomoc" aria-label="Pomoc"><BookIcon /></a>
    <a href="#zdalna" aria-label="Pomoc zdalna"><RemoteIcon /></a>
    <span className="text-[11px] leading-4 whitespace-nowrap font-['Open_Sans',sans-serif]">Wszystkich: 20szt. | Przefiltrowanych: 19szt.</span>
  </footer>
)

const App = () => {
  return (
    <div className="relative grid grid-cols-[635fr_27px_757fr] h-screen min-h-[600px] overflow-hidden bg-white text-black text-[11px] leading-[14px] font-['Liberation_Sans',Arial,sans-serif]">
      <main className="min-w-0 overflow-hidden">
        <ShelfModel />
      </main>

      <nav className="pt-[75px] flex flex-col">
        {sideTabs.map((tab) => (
          <button key={tab.name} type="button" aria-label={tab.name} className="h-6 flex items-center justify-center bg-[#d4d4d4] border border-b-0 border-[#808080]">
            {tab.icon}
          </button>
        ))}
        <button type="button" aria-label="MacroSolid" className="h-6 flex items-center justify-center bg-[#fafafa] border border-r-0 border-[#808080]">
          <ChevronsIcon />
        </button>
      </nav>

      <aside className="min-w-0 min-h-0 flex flex-col bg-[#f7f7f7] border-l border-r border-[#808080]">
        <TitleBar />

        <div className="shrink-0 flex items-center h-[33px] pl-[11px] pr-[5px]">
          <SquareButton label="Ustawienia widoku"><GearIcon /></SquareButton>
          <Select value="WIDOK DOMYŚLNY" label="Widok" className="flex-1 ml-[7px]" />
          <SquareButton label="Konfiguracja widoku" className="ml-2"><GearMonitorIcon /></SquareButton>
          <SquareButton label="Zmień widok" className="ml-2"><SwapMonitorIcon /></SquareButton>
          <SquareButton label="Wklej widok" className="ml-2"><ClipboardMonitorIcon /></SquareButton>
        </div>

        <div className="shrink-0 flex items-end h-6 pl-[7px]" role="tablist">
          <button type="button" role="tab" aria-selected="true" className="w-[46px] h-[21px] pr-1.5 pb-1 -mb-px bg-white border border-b-0 border-[#dadada]">BOM</button>
          <button type="button" role="tab" aria-selected="false" className="w-[65px] h-[18px] bg-[#f0f0f0] border border-l-0 border-b-0 border-[#dadada]">Moje makra</button>
          <button type="button" role="tab" aria-selected="false" className="w-10 h-[18px] bg-[#f0f0f0] border border-l-0 border-b-0 border-[#dadada]">Makra</button>
        </div>

        <div className="flex-1 min-h-0 ml-[7px] mr-[3px] pt-[2px] pl-1 pr-[2px] pb-[2px] flex flex-col border border-[#dadada] bg-[#f7f7f7]">
          <button type="button" className="h-[25px] shrink-0 mb-1 pb-[2px] bg-[#e1e1e1] border border-[#adadad]">Pobierz dane</button>
          <FilterPanel />
          <div className="h-[10px] shrink-0" />
          <Toolbar />
          <BomTable />
          <ExportBar />
        </div>

        <StatusBar />
      </aside>

      <svg viewBox="0 0 1419 905" className="absolute inset-0 w-full h-full z-20 pointer-events-none drop-shadow-[2px_3px_2px_rgba(0,0,0,0.4)]" fill="#fa4040" stroke="#fa4040" aria-hidden="true">
        <path d="M998 354L958 416" strokeWidth="4.5" strokeLinecap="round" />
        <path d="M947 432L949 412L964 422Z" strokeWidth="1" />
        <path d="M1310 376L1339 417" strokeWidth="4.5" strokeLinecap="round" />
        <path d="M1347 428L1332 419L1345 410Z" strokeWidth="1" />
      </svg>
    </div>
  )
}

export default App
